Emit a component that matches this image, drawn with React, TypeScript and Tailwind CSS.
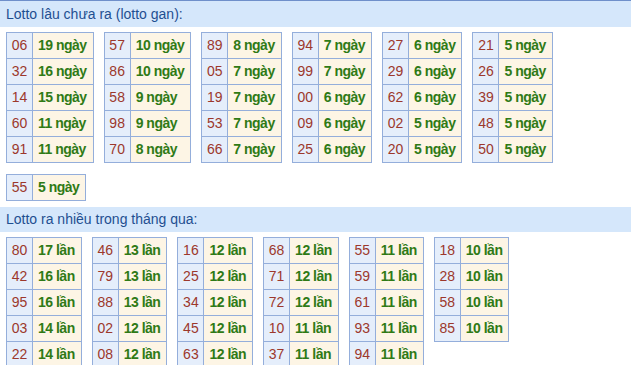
const ganData: [string, number][] = [
  ['06', 19], ['32', 16], ['14', 15], ['60', 11], ['91', 11],
  ['57', 10], ['86', 10], ['58', 9], ['98', 9], ['70', 8],
  ['89', 8], ['05', 7], ['19', 7], ['53', 7], ['66', 7],
  ['94', 7], ['99', 7], ['00', 6], ['09', 6], ['25', 6],
  ['27', 6], ['29', 6], ['62', 6], ['02', 5], ['20', 5],
  ['21', 5], ['26', 5], ['39', 5], ['48', 5], ['50', 5],
  ['55', 5],
]

const nhieuData: [string, number][] = [
  ['80', 17], ['42', 16], ['95', 16], ['03', 14], ['22', 14],
  ['46', 13], ['79', 13], ['88', 13], ['02', 12], ['08', 12],
  ['16', 12], ['25', 12], ['34', 12], ['45', 12], ['63', 12],
  ['68', 12], ['71', 12], ['72', 12], ['10', 11], ['37', 11],
  ['55', 11], ['59', 11], ['61', 11], ['93', 11], ['94', 11],
  ['18', 10], ['28', 10], ['58', 10], ['85', 10],
]

function chunk<T>(list: T[], size: number): T[][] {
  const out: T[][] = []
  for (let i = 0; i < list.length; i += size) out.push(list.slice(i, i + size))
  return out
}

function LottoTable({ rows, unit }: { rows: [string, number][]; unit: string }) {
  return (
    <div className="self-start grid grid-cols-[26px_auto] border-t border-l border-[#94aedb]">
      {rows.map(([num, count]) => [
        <div
          key={num + 'n'}
          className="h-[26px] flex items-center justify-center border-r border-b border-[#94aedb] bg-[#e5eefb] text-[14px] text-[#9c382c]"
        >
          {num}
        </div>,
        <div
          key={num + 'c'}
          className="h-[26px] pl-[5px] pr-[6px] flex items-center border-r border-b border-[#94aedb] bg-[#fdf5e5] text-[14px] tracking-[-0.5px] font-bold text-[#2f7a16] whitespace-nowrap"
        >
          {count} {unit}
        </div>,
      ])}
    </div>
  )
}

export default function App() {
  return (
    <div
      className="w-[631px] h-[365px] overflow-hidden bg-white"
      style={{ fontFamily: '"Liberation Sans", Arial, sans-serif' }}
    >
      {/* Lotto gan */}
      <div className="h-[27px] border-t border-[#6f8fca] bg-[#d5e7fb] px-[6px] flex items-center text-[14px] text-[#1f4f91]">
        Lotto lâu chưa ra (lotto gan):
      </div>
      <div className="flex flex-wrap gap-x-[10px] gap-y-[11px] pl-[6px] pt-[5px]">
        {chunk(ganData, 5).map((rows, i) => (
          <LottoTable key={i} rows={rows} unit="ngày" />
        ))}
      </div>

      {/* Lotto ra nhiều */}
      <div className="mt-[6px] h-[25px] bg-[#d5e7fb] px-[6px] flex items-center text-[14px] text-[#1f4f91]">
        Lotto ra nhiều trong tháng qua:
      </div>
      <div className="flex flex-wrap gap-x-[10px] gap-y-[11px] pl-[6px] pt-[5px]">
        {chunk(nhieuData, 5).map((rows, i) => (
          <LottoTable key={i} rows={rows} unit="lần" />
        ))}
      </div>
    </div>
  )
}
